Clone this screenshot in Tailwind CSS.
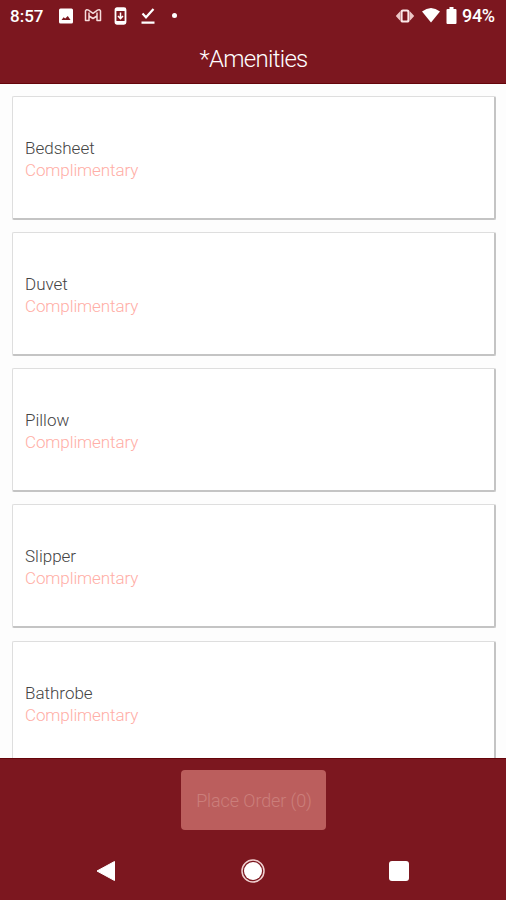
<!DOCTYPE html>
<html lang="en">
<head>
  <meta charset="UTF-8">
  <title>Amenities</title>
  <script src="https://cdn.jsdelivr.net/npm/@tailwindcss/browser@4"></script>
</head>
<body class="bg-[#fdfdfd] font-['Roboto',sans-serif]">
  <div class="w-[506px] h-[900px] flex flex-col overflow-hidden">

    <header class="h-[84px] shrink-0 bg-[#7c171f] border-b border-[#65050a] text-white">
      <!-- status bar -->
      <div class="h-8 flex items-center justify-between pl-[10px] pr-[9px]">
        <div class="flex items-center">
          <span class="w-[47px] text-[17px] font-medium leading-none whitespace-nowrap">8:57</span>
          <svg class="w-4 h-4 ml-px mb-px" viewBox="0 0 16 16"><path fill="#fff" fill-rule="evenodd" d="M2.500.500h11A1.500 1.500 0 0 1 15 2v12a1.500 1.500 0 0 1-1.500 1.500h-11A1.500 1.500 0 0 1 1 14V2A1.500 1.500 0 0 1 2.500.500zM3.500 12h9L9.800 8 7.200 10.500 5.600 9.200z"/></svg>
          <svg class="w-[18px] h-4 ml-[10px] mb-[2px]" viewBox="0 0 18 16" fill="none" stroke="#f6dcdc" stroke-width="1.500" stroke-linejoin="round"><path d="M1.500 13.500V3.800Q2.500 2 4.500 3.200L9 6.300 13.500 3.200Q15.500 2 16.500 3.800V13.500H13V9L9 11.500 5 9V13.500zM5 9V5.500M13 9V5.500"/></svg>
          <svg class="w-[13px] h-[18px] ml-[12px] mb-px" viewBox="0 0 13 18"><rect x="1.500" y="1.200" width="10" height="15.600" rx="1.500" fill="none" stroke="#fff" stroke-width="1.800"/><path d="M1 2h11v2H1zM1 14h11v2H1z" fill="#fff"/><path d="M6.500 5.500v6M4 9l2.500 2.600L9 9" fill="none" stroke="#fff" stroke-width="1.500"/></svg>
          <svg class="w-4 h-[18px] ml-[13px] mb-px" viewBox="0 0 16 18" fill="none" stroke="#fff" stroke-width="2.200"><path d="M2.500 6.500 6 10.300 13.500 2M1.500 15.700h13"/></svg>
          <span class="w-[5px] h-[5px] ml-[16px] mb-px rounded-full bg-white"></span>
        </div>
        <div class="flex items-center">
          <svg class="w-[20px] h-[14px] mb-px" viewBox="0 0 20 14"><path d="M5 2.500 3.500 4 .8 7l2.700 3L5 11.500zM15 2.500 16.500 4l2.700 3-2.700 3L15 11.500z" fill="#ecc6c6"/><rect x="6.500" y="1.500" width="7" height="11" rx="1.500" fill="none" stroke="#fbe8e8" stroke-width="2.200"/></svg>
          <svg class="w-[20px] h-[16px] ml-[6px] mb-[2px]" viewBox="0 0 20 16"><path fill="#fff" d="M1 4.500Q10-2.500 19 4.500L10 15.500z"/></svg>
          <svg class="w-[11px] h-[17px] ml-[5px] mb-[2px]" viewBox="0 0 11 17"><path fill="#fff" d="M3.500 0h4v2H9.500Q10.500 2 10.500 3V16Q10.500 17 9.500 17h-8Q.5 17 .5 16V3Q.5 2 1.500 2h2z"/></svg>
          <span class="ml-[5px] w-[35px] text-[18px] font-medium leading-none tracking-[-0.300px] whitespace-nowrap">94%</span>
        </div>
      </div>
      <h1 class="h-[52px] flex items-center justify-center text-[24px] font-light tracking-[-0.700px]"><span class="pl-px pt-px">*Amenities</span></h1>
    </header>

    <main class="flex-1 min-h-0 overflow-hidden pt-[11.600px] pl-[12px] pr-[10px] text-[17px] font-light leading-[22px] text-[#444]">
      <div class="flex flex-col gap-[12.300px]">
        <section class="h-[124px] shrink-0 bg-white border border-[#dedede] border-r-2 border-r-[#c4c4c4] border-b-2 border-b-[#c4c4c4] rounded-[2px] pl-[12px] pt-[40px]">
          <p>Bedsheet</p>
          <p class="text-[#ffaea6] tracking-[-0.100px]">Complimentary</p>
        </section>
        <section class="h-[124px] shrink-0 bg-white border border-[#dedede] border-r-2 border-r-[#c4c4c4] border-b-2 border-b-[#c4c4c4] rounded-[2px] pl-[12px] pt-[40px]">
          <p>Duvet</p>
          <p class="text-[#ffaea6] tracking-[-0.100px]">Complimentary</p>
        </section>
        <section class="h-[124px] shrink-0 bg-white border border-[#dedede] border-r-2 border-r-[#c4c4c4] border-b-2 border-b-[#c4c4c4] rounded-[2px] pl-[12px] pt-[40px]">
          <p>Pillow</p>
          <p class="text-[#ffaea6] tracking-[-0.100px]">Complimentary</p>
        </section>
        <section class="h-[124px] shrink-0 bg-white border border-[#dedede] border-r-2 border-r-[#c4c4c4] border-b-2 border-b-[#c4c4c4] rounded-[2px] pl-[12px] pt-[40px]">
          <p>Slipper</p>
          <p class="text-[#ffaea6] tracking-[-0.100px]">Complimentary</p>
        </section>
        <section class="h-[124px] shrink-0 bg-white border border-[#dedede] border-r-2 border-r-[#c4c4c4] border-b-2 border-b-[#c4c4c4] rounded-[2px] pl-[12px] pt-[40px]">
          <p>Bathrobe</p>
          <p class="text-[#ffaea6] tracking-[-0.100px]">Complimentary</p>
        </section>
      </div>
    </main>

    <footer class="h-[142px] shrink-0 bg-[#7c171f] border-t border-[#65050a] pt-[11px]">
      <button class="block mx-auto w-[145px] h-[60px] rounded-[4px] bg-[#bb5e5d] pl-[2px] text-[18px] font-light tracking-[-0.100px] text-[#cb7e7b]">Place Order (0)</button>
      <!-- system navigation -->
      <nav class="mt-[29px] h-6 flex items-center justify-between pl-[96px] pr-[97px]">
        <svg class="w-5 h-[22px]" viewBox="0 0 20 22"><path d="M18.500 1.500v19L1 11z" fill="#fff" stroke="#fff" stroke-linejoin="round"/></svg>
        <svg class="w-6 h-6 ml-px" viewBox="0 0 24 24"><circle cx="12" cy="12" r="11" fill="none" stroke="#f0d0d0" stroke-width="1.500"/><circle cx="12" cy="12" r="9" fill="#fff"/></svg>
        <span class="w-5 h-5 rounded-[3px] bg-white"></span>
      </nav>
    </footer>

  </div>
</body>
</html>
